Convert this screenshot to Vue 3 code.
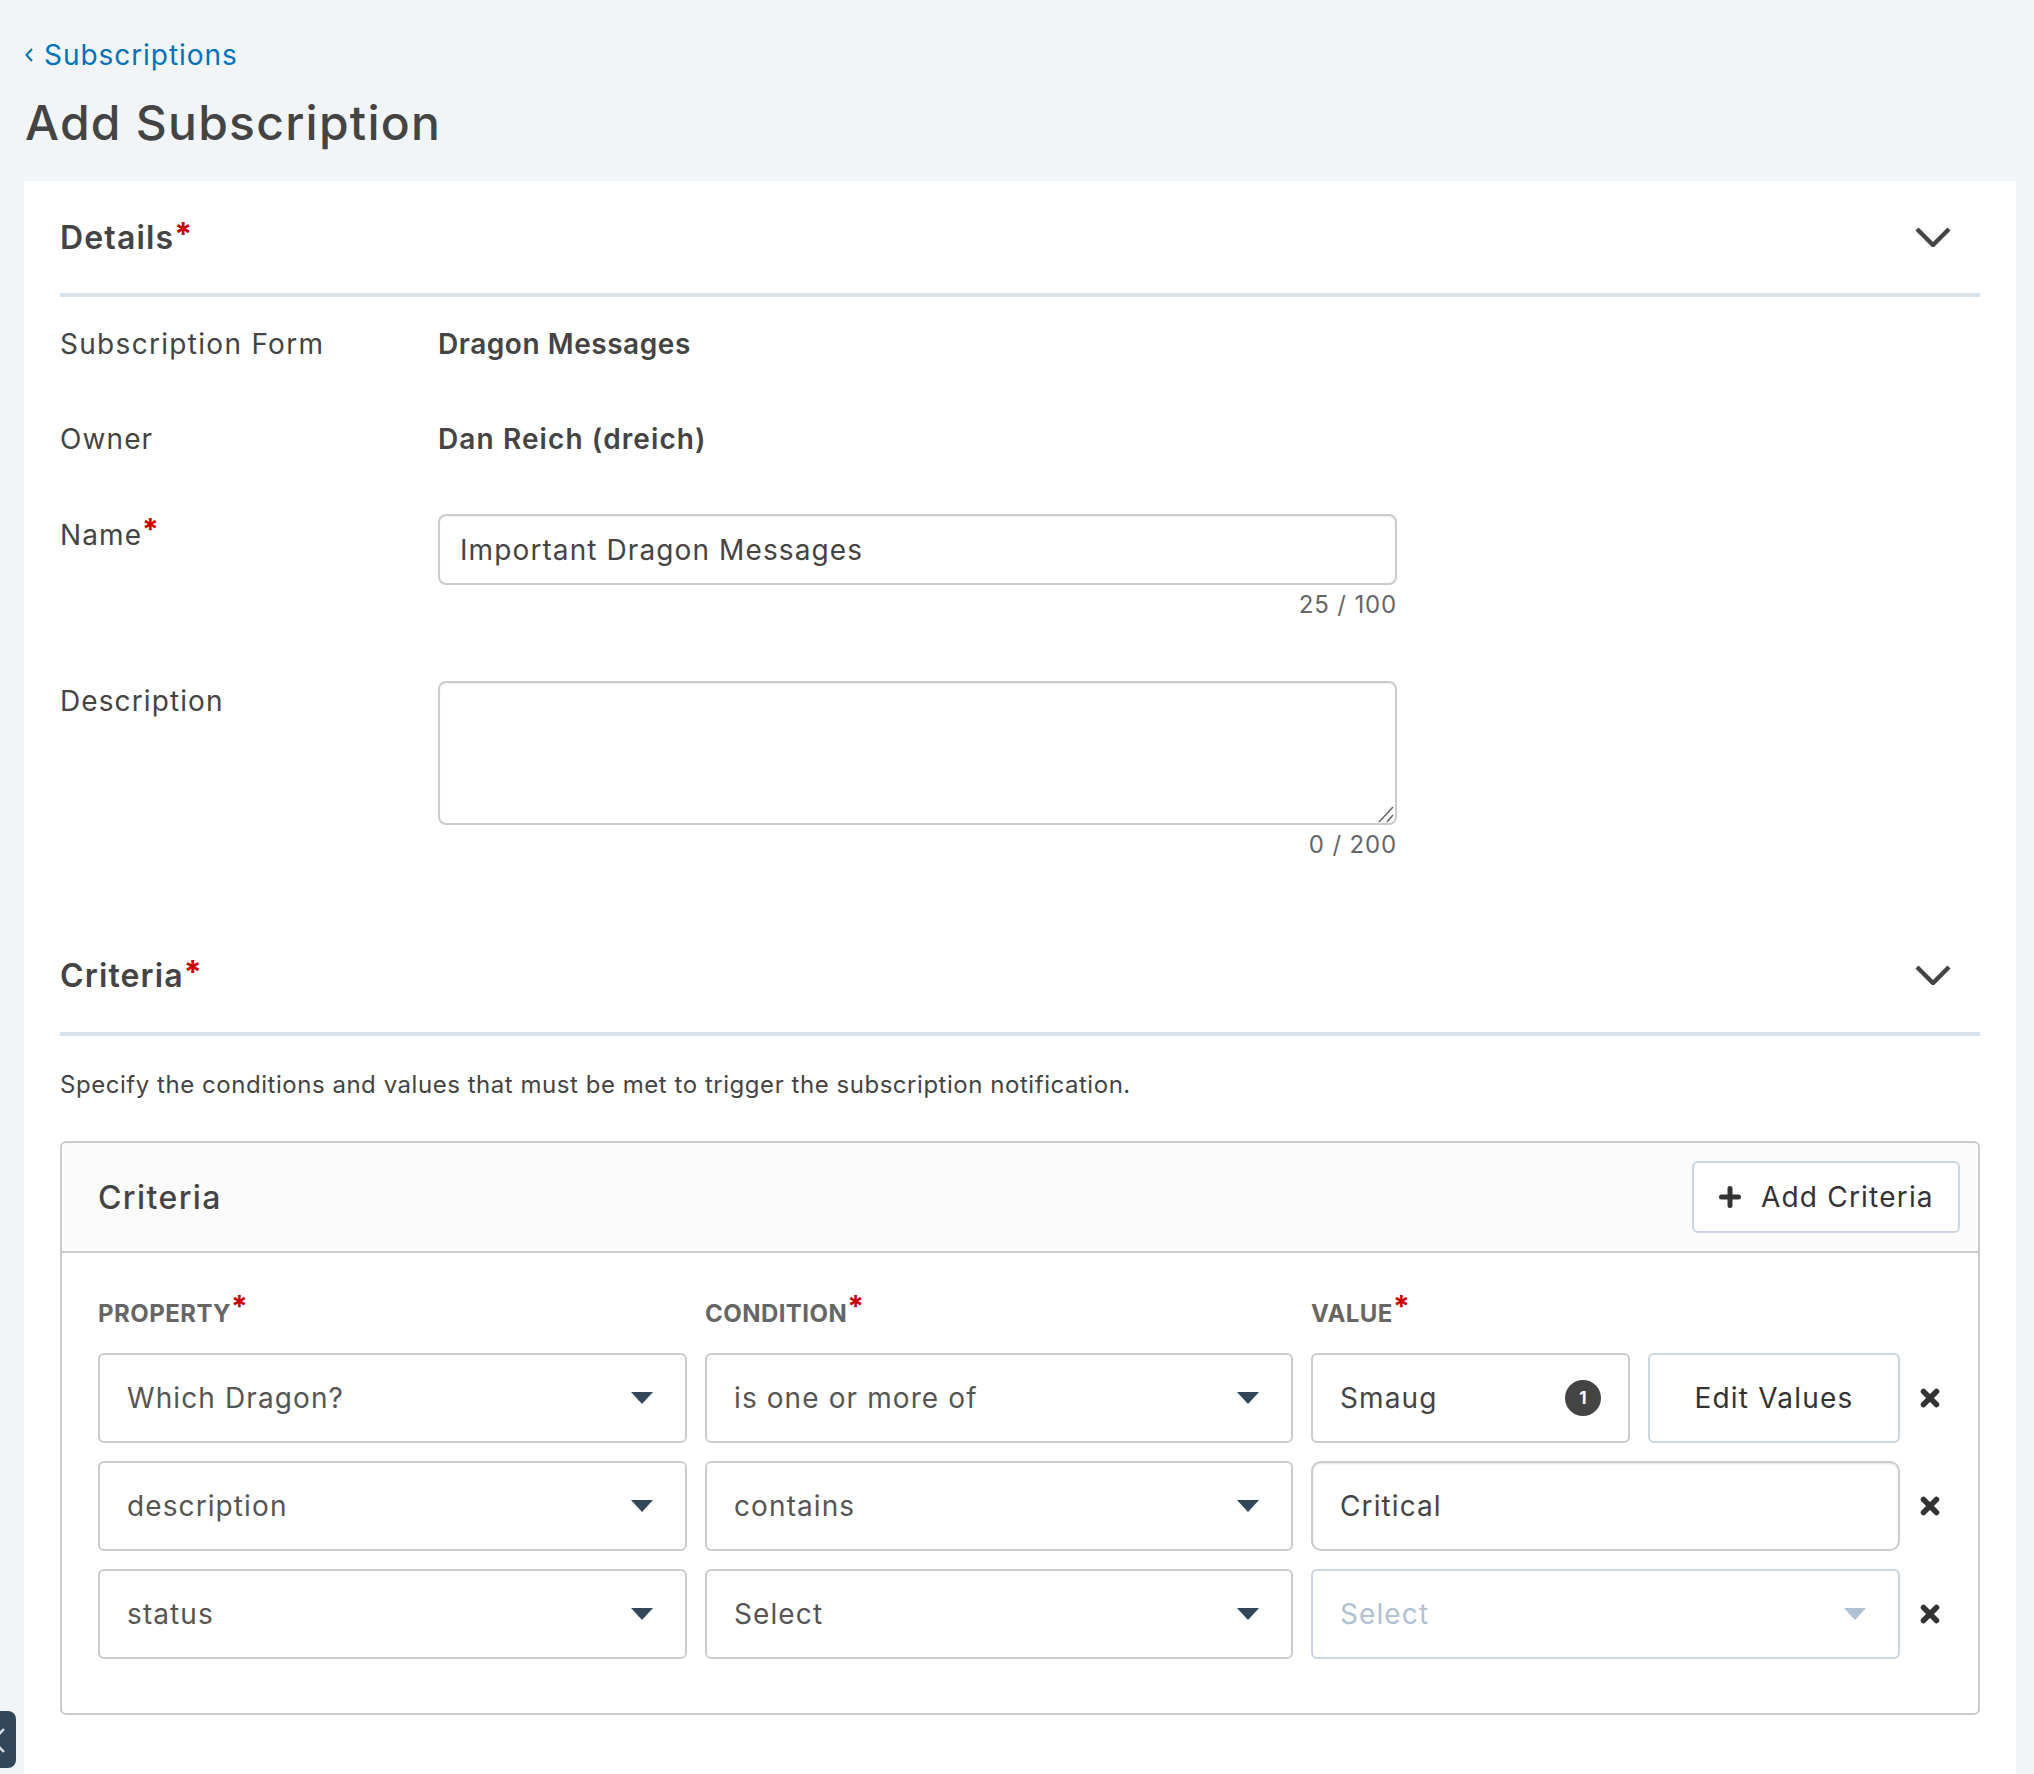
<script setup>
const rows = [
  { id: 1, property: 'Which Dragon?', condition: 'is one or more of', kind: 'multi', value: 'Smaug' },
  { id: 2, property: 'description', condition: 'contains', kind: 'text', value: 'Critical' },
  { id: 3, property: 'status', condition: 'Select', kind: 'select', value: 'Select' }
]
const columns = ['PROPERTY', 'CONDITION', 'VALUE']
</script>

<template>
  <div class="page">
    <a class="crumb">
      <svg class="crumb-icon" width="10" height="16" viewBox="0 0 10 16"><path d="M8 2 2.5 8 8 14" fill="none" stroke="currentColor" stroke-width="2" /></svg>
      <span>Subscriptions</span>
    </a>
    <h1 class="title">Add Subscription</h1>

    <main class="card">
      <header class="section-head">
        <h2 class="section-title">Details<span class="req">*</span></h2>
        <svg class="chevron" width="36" height="20" viewBox="0 0 36 20"><path d="M2 2 18 18 34 2" fill="none" stroke="#444" stroke-width="4.4" /></svg>
      </header>

      <div class="form-row first">
        <div class="form-label form-name">Subscription Form</div>
        <div class="form-value dragon">Dragon Messages</div>
      </div>
      <div class="form-row owner">
        <div class="form-label">Owner</div>
        <div class="form-value dan">Dan Reich (dreich)</div>
      </div>
      <div class="form-row field-name">
        <div class="form-label name-label">Name<span class="req small">*</span></div>
        <div class="field">
          <div class="text-input">Important Dragon Messages</div>
          <div class="count">25 / 100</div>
        </div>
      </div>
      <div class="form-row field-desc">
        <div class="form-label desc-label">Description</div>
        <div class="field">
          <div class="area-wrap">
            <textarea class="text-area" aria-label="Description"></textarea>
            <svg class="grip" width="18" height="18" viewBox="0 0 18 18"><path d="M2 17 16 2M10 17 16 10" fill="none" stroke="#666" stroke-width="1.6" /></svg>
          </div>
          <div class="count">0 / 200</div>
        </div>
      </div>

      <header class="section-head criteria-head">
        <h2 class="section-title">Criteria<span class="req">*</span></h2>
        <svg class="chevron" width="36" height="20" viewBox="0 0 36 20"><path d="M2 2 18 18 34 2" fill="none" stroke="#444" stroke-width="4.4" /></svg>
      </header>
      <p class="hint">Specify the conditions and values that must be met to trigger the subscription notification.</p>

      <section class="panel">
        <div class="panel-head">
          <h3 class="panel-title">Criteria</h3>
          <button class="btn add-btn" type="button">
            <svg width="22" height="22" viewBox="0 0 22 22"><path d="M11 2.5v17M2.5 11h17" fill="none" stroke="#333" stroke-width="5" stroke-linecap="round" /></svg>
            <span>Add Criteria</span>
          </button>
        </div>
        <div class="panel-body">
          <div class="grid">
            <div v-for="c in columns" :key="c" class="col-label">{{ c }}<span class="req small">*</span></div>
            <div></div>
            <template v-for="r in rows" :key="r.id">
              <div class="box select"><span>{{ r.property }}</span><i class="caret"></i></div>
              <div class="box select"><span>{{ r.condition }}</span><i class="caret"></i></div>
              <div v-if="r.kind === 'multi'" class="value-multi">
                <div class="box smaug"><span>{{ r.value }}</span><b class="badge">1</b></div>
                <button class="btn edit-btn" type="button">Edit Values</button>
              </div>
              <div v-else-if="r.kind === 'text'" class="box critical"><span>{{ r.value }}</span></div>
              <div v-else class="box select disabled"><span>{{ r.value }}</span><i class="caret"></i></div>
              <svg class="remove" width="20" height="20" viewBox="0 0 20 20"><path d="M3.5 3.5 16.5 16.5M16.5 3.5 3.5 16.5" fill="none" stroke="#333" stroke-width="5.5" stroke-linecap="round" /></svg>
            </template>
          </div>
        </div>
      </section>
    </main>

    <div class="side-tab">
      <svg width="16" height="57" viewBox="0 0 16 57"><path d="M4 18-7 29.5 4 41" fill="none" stroke="#d5dce4" stroke-width="2.5" /></svg>
    </div>
  </div>
</template>

<style scoped>
.page {
  position: relative;
  height: 1774px;
  box-sizing: border-box;
  padding-top: 37px;
  background: #f1f5f8;
  font-family: Inter, "Liberation Sans", sans-serif;
  font-size: 28px;
  letter-spacing: 1.1px;
  color: #444;
  overflow: hidden;
}
.crumb {
  display: flex;
  align-items: center;
  gap: 10px;
  height: 36px;
  padding-left: 24px;
  color: #0073bb;
  font-size: 28px;
  line-height: 36px;
  letter-spacing: 0.95px;
}
.title {
  margin: 20px 0 28px 25px;
  font-size: 48px;
  line-height: 60px;
  font-weight: 500;
  letter-spacing: 1.25px;
  color: #444;
}
.card {
  box-sizing: border-box;
  margin: 0 18px 0 24px;
  padding: 0 36px 60px;
  background: #fff;
}
.section-head {
  display: flex;
  align-items: center;
  justify-content: space-between;
  height: 112px;
  padding-right: 29px;
  border-bottom: 4px solid #d9e3ec;
}
.section-title {
  margin: 0;
  font-size: 32px;
  font-weight: 600;
  letter-spacing: 1.15px;
  color: #444;
}
.req {
  font-size: 32px;
  line-height: 0;
  vertical-align: 3px;
  letter-spacing: 0;
  color: #c00;
  font-weight: 700;
}
.req.small {
  font-size: 30px;
  vertical-align: 5px;
}
.form-row {
  display: grid;
  grid-template-columns: 378px 959px;
  line-height: 36px;
}
.form-row.first {
  margin-top: 29px;
}
.form-row.owner {
  margin-top: 59px;
}
.form-row.field-name {
  margin-top: 57px;
}
.form-row.field-desc {
  margin-top: 61px;
}
.form-name {
  letter-spacing: 1.3px;
}
.name-label {
  padding-top: 3px;
}
.desc-label {
  padding-top: 2px;
}
.form-value {
  font-weight: 600;
}
.dragon {
  letter-spacing: 0.55px;
}
.dan {
  letter-spacing: 1.1px;
}
.text-input {
  box-sizing: border-box;
  display: flex;
  align-items: center;
  height: 71px;
  padding: 0 20px;
  border: 2px solid #ccc;
  border-radius: 8px;
  box-shadow: inset 0 1px 2px rgba(0, 0, 0, 0.06);
}
.area-wrap {
  position: relative;
}
.text-area {
  display: block;
  box-sizing: border-box;
  width: 100%;
  height: 144px;
  border: 2px solid #ccc;
  border-radius: 8px;
  background: #fff;
  outline: none;
  resize: none;
  box-shadow: inset 0 1px 2px rgba(0, 0, 0, 0.06);
}
.grip {
  position: absolute;
  right: 2px;
  bottom: 2px;
  display: block;
}
.count {
  margin-top: 5px;
  font-size: 24px;
  line-height: 30px;
  letter-spacing: 0.85px;
  text-align: right;
  color: #666;
}
.criteria-head {
  margin-top: 58px;
  height: 114px;
}
.hint {
  margin: 33px 0 40px;
  font-size: 24px;
  line-height: 32px;
  letter-spacing: 0.54px;
  color: #444;
}
.panel {
  border: 2px solid #ccc;
  border-radius: 6px;
}
.panel-head {
  display: flex;
  align-items: center;
  justify-content: space-between;
  padding: 18px 18px 18px 36px;
  border-bottom: 2px solid #ccc;
  background: #fbfbfb;
  border-radius: 6px 6px 0 0;
}
.panel-title {
  margin: 0;
  font-size: 32px;
  font-weight: 500;
  letter-spacing: 1.4px;
  color: #444;
}
.btn {
  box-sizing: border-box;
  height: 72px;
  border: 2px solid #cbd6e2;
  border-radius: 6px;
  background: #fff;
  font: inherit;
  letter-spacing: 1.2px;
  color: #333;
}
.add-btn {
  display: flex;
  align-items: center;
  gap: 20px;
  width: 268px;
  padding: 0 0 0 25px;
}
.panel-body {
  padding: 46px 36px 54px;
}
.grid {
  display: grid;
  grid-template-columns: 589px 588px 589px 24px;
  column-gap: 18px;
  row-gap: 18px;
  align-items: center;
}
.col-label {
  margin-bottom: 6px;
  font-size: 24px;
  line-height: 30px;
  font-weight: 700;
  letter-spacing: 0.45px;
  color: #666;
}
.box {
  box-sizing: border-box;
  display: flex;
  align-items: center;
  justify-content: space-between;
  height: 90px;
  padding: 0 32px 0 27px;
  border: 2px solid #ccc;
  border-radius: 6px;
  background: #fff;
  color: #555;
}
.caret {
  display: block;
  width: 0;
  height: 0;
  border-left: 11px solid transparent;
  border-right: 11px solid transparent;
  border-top: 12px solid #33475b;
}
.value-multi {
  display: grid;
  grid-template-columns: 319px 252px;
  column-gap: 18px;
}
.smaug {
  padding-right: 27px;
  color: #444;
}
.badge {
  display: flex;
  align-items: center;
  justify-content: center;
  width: 36px;
  height: 36px;
  border-radius: 50%;
  background: #444;
  color: #fff;
  font-size: 17px;
  font-weight: 700;
  letter-spacing: 0;
}
.edit-btn {
  height: 90px;
}
.critical {
  color: #444;
  border-radius: 10px;
  box-shadow: inset 0 1px 2px rgba(0, 0, 0, 0.12);
}
.disabled {
  border-color: #cbd6e2;
  color: #b0c1d4;
}
.disabled .caret {
  border-top-color: #b0c1d4;
}
.remove {
  display: block;
  margin-left: 2px;
}
.side-tab {
  position: absolute;
  left: 0;
  top: 1711px;
  width: 16px;
  height: 57px;
  border-radius: 0 8px 8px 0;
  background: #33475b;
}
.side-tab svg {
  display: block;
}
</style>

<style>
body {
  margin: 0;
  background: #f1f5f8;
}
</style>
